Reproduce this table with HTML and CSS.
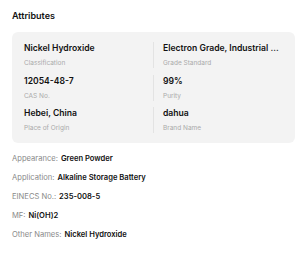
FILE: index.html
```html
<!DOCTYPE html>
<html>
<head>
<meta charset="utf-8">
<link rel="stylesheet" href="styles.css">
</head>
<body>
<div class="page">
  <h2 class="title">Attributes</h2>
  <div class="card">
    <div class="col">
      <div class="item"><div class="val">Nickel Hydroxide</div><div class="lab">Classification</div></div>
      <div class="item"><div class="val">12054-48-7</div><div class="lab">CAS No.</div></div>
      <div class="item"><div class="val">Hebei, China</div><div class="lab">Place of Origin</div></div>
    </div>
    <div class="col right">
      <div class="item"><div class="val">Electron Grade, Industrial ...</div><div class="lab">Grade Standard</div></div>
      <div class="item"><div class="val">99%</div><div class="lab">Purity</div></div>
      <div class="item"><div class="val">dahua</div><div class="lab">Brand Name</div></div>
    </div>
  </div>
  <ul class="list">
    <li><span class="k">Appearance:</span><span class="v">Green Powder</span></li>
    <li><span class="k">Application:</span><span class="v">Alkaline Storage Battery</span></li>
    <li><span class="k">EINECS No.:</span><span class="v">235-008-5</span></li>
    <li><span class="k">MF:</span><span class="v">Ni(OH)2</span></li>
    <li><span class="k">Other Names:</span><span class="v">Nickel Hydroxide</span></li>
  </ul>
</div>
</body>
</html>
```
FILE: styles.css
```css
html, body { margin: 0; padding: 0; background: #fff; }
body { font-family: Inter, "Noto Sans", sans-serif; color: #111; }
.page { padding: 10px 5px 0 12px; width: 283px; }
.title { margin: 0; font-size: 9px; line-height: 12px; font-weight: 600; }
.card {
  margin-top: 10px;
  background: #f3f3f3;
  border-radius: 6px;
  padding: 10px 12px 10px 12px;
  display: grid;
  grid-template-columns: 129px 1fr;
}
.col { display: flex; flex-direction: column; gap: 6.5px; }
.right .item { border-left: 1px solid #e3e3e3; padding-left: 9px; }
.item { display: flex; flex-direction: column; }
.val { font-size: 8.6px; line-height: 12px; font-weight: 600; white-space: nowrap; }
.lab { font-size: 6.5px; line-height: 10px; margin-top: 4px; color: #aaa; }
.list { list-style: none; margin: 10px 0 0; padding: 0; display: flex; flex-direction: column; gap: 7px; }
.list li { font-size: 7.6px; line-height: 12px; display: flex; gap: 3px; }
.k { color: #8a8a8a; }
.v { font-weight: 600; color: #111; }
```
